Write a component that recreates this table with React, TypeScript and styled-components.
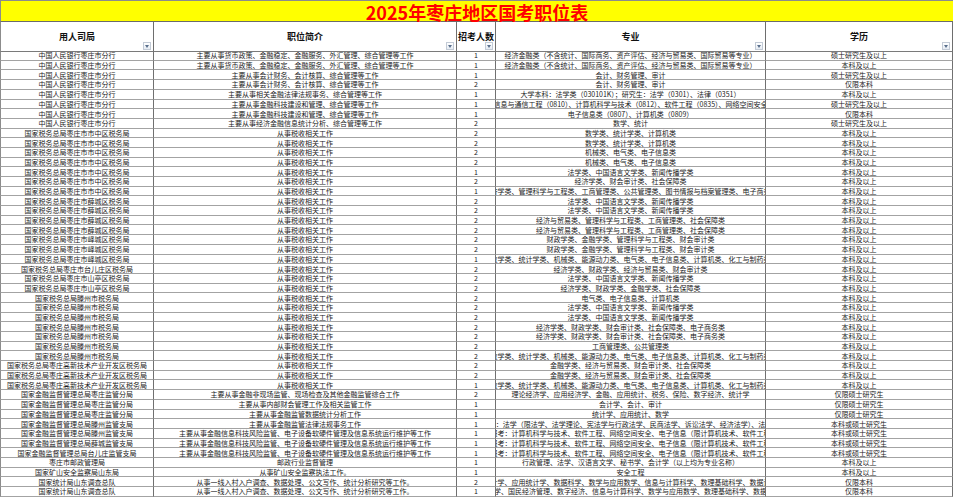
import React from "react";
import styled, { createGlobalStyle } from "styled-components";

const GlobalStyle = createGlobalStyle`
  body {
    margin: 0;
    background: #fff;
    font-family: "Noto Sans CJK SC", "Noto Sans", sans-serif;
  }
`;

const Sheet = styled.div`
  width: 953px;
  overflow: hidden;
`;

const TitleBar = styled.div`
  height: 22px;
  box-sizing: border-box;
  background: #ffff00;
  border-top: 1px solid #8c8c8c;
  border-bottom: 1px solid #6b6b6b;
  border-left: 1px solid #8c8c8c;
  display: flex;
  align-items: center;
  justify-content: center;
  color: #ff0000;
  font-size: 18px;
  font-weight: 700;
  line-height: 1;
  padding-top: 1px;
`;

const Grid = styled.div`
  display: grid;
  grid-template-columns: 154px 303px 39px 270px 187px;
  grid-auto-rows: 9.7px;
`;

const HeaderCell = styled.div<{ $first?: boolean }>`
  grid-row: span 3;
  height: 30.4px;
  box-sizing: border-box;
  position: relative;
  display: flex;
  align-items: center;
  justify-content: center;
  font-size: 9px;
  font-weight: 700;
  color: #111;
  white-space: nowrap;
  border-right: 1px solid #6e6e6e;
  border-bottom: 1px solid #7a7a7a;
  border-left: ${(p) => (p.$first ? "1px solid #8c8c8c" : "none")};
`;

const FilterButton = styled.span`
  position: absolute;
  right: 2px;
  bottom: 1px;
  width: 6px;
  height: 6px;
  border: 1px solid #c3cbd6;
  background: linear-gradient(#ffffff, #e6ecf4);
  display: flex;
  align-items: center;
  justify-content: center;
`;

const Cell = styled.div<{ $first?: boolean }>`
  box-sizing: border-box;
  display: flex;
  align-items: center;
  justify-content: center;
  overflow: hidden;
  white-space: nowrap;
  font-size: 7px;
  line-height: 1;
  color: #1a1a1a;
  padding-top: 1px;
  border-right: 1px solid #707070;
  border-bottom: 1px solid #a3a3a3;
  border-left: ${(p) => (p.$first ? "1px solid #8c8c8c" : "none")};
`;

const Arrow = () => (
  <svg width="4" height="3" viewBox="0 0 4 3">
    <path d="M0 0 L4 0 L2 3 Z" fill="#5a6f8c" />
  </svg>
);

type Row = [string, string, number, string, string];

const rmb = "中国人民银行枣庄市分行";
const tax = (d: string) => `国家税务总局枣庄市${d}税务局`;
const tz = "国家税务总局滕州市税务局";
const gx = "国家税务总局枣庄高新技术产业开发区税务局";
const work = "从事税收相关工作";
const econ = "经济金融类（不含统计、国际商务、资产评估、经济与贸易类、国际贸易等专业）";
const law = "法学类、中国语言文学类、新闻传播学类";
const sci = "数学类、统计学类、机械类、能源动力类、电气类、电子信息类、计算机类、化工与制药类";
const it = "主要从事金融信息科技风险监管、电子设备软硬件管理及信息系统运行维护等工作";
const itMajor = "研究生报考：计算机科学与技术、软件工程、网络空间安全、电子信息（限计算机技术、软件工程方向）";
const stat = "从事一线入村入户调查、数据处理、公文写作、统计分析研究等工作。";

const rows: Row[] = [
  [rmb, "主要从事货币政策、金融稳定、金融服务、外汇管理、综合管理等工作", 1, econ, "硕士研究生及以上"],
  [rmb, "主要从事货币政策、金融稳定、金融服务、外汇管理、综合管理等工作", 1, econ, "本科及以上"],
  [rmb, "主要从事会计财务、会计核算、综合管理等工作", 1, "会计、财务管理、审计", "硕士研究生及以上"],
  [rmb, "主要从事会计财务、会计核算、综合管理等工作", 2, "会计、财务管理、审计", "仅限本科"],
  [rmb, "主要从事相关金融法律法规事务、综合管理等工作", 1, "大学本科：法学类（030101K）；研究生：法学（0301）、法律（0351）", "本科及以上"],
  [rmb, "主要从事金融科技建设和管理、综合管理等工作", 1, "信息与通信工程（0810）、计算机科学与技术（0812）、软件工程（0835）、网络空间安全", "硕士研究生及以上"],
  [rmb, "主要从事金融科技建设和管理、综合管理等工作", 1, "电子信息类（0807）、计算机类（0809）", "仅限本科"],
  [rmb, "主要从事经济金融信息统计分析、综合管理等工作", 2, "数学、统计", "硕士研究生及以上"],
  [tax("市中区"), work, 2, "数学类、统计学类、计算机类", "本科及以上"],
  [tax("市中区"), work, 2, "数学类、统计学类、计算机类", "本科及以上"],
  [tax("市中区"), work, 2, "机械类、电气类、电子信息类", "本科及以上"],
  [tax("市中区"), work, 2, "机械类、电气类、电子信息类", "本科及以上"],
  [tax("市中区"), work, 1, law, "本科及以上"],
  [tax("市中区"), work, 2, "经济学类、财会审计类、社会保障类", "本科及以上"],
  [tax("市中区"), work, 1, "经济学类、管理科学与工程类、工商管理类、公共管理类、图书情报与档案管理类、电子商务类", "本科及以上"],
  [tax("薛城区"), work, 2, law, "本科及以上"],
  [tax("薛城区"), work, 2, law, "本科及以上"],
  [tax("薛城区"), work, 2, "经济与贸易类、管理科学与工程类、工商管理类、社会保障类", "本科及以上"],
  [tax("薛城区"), work, 2, "经济与贸易类、管理科学与工程类、工商管理类、社会保障类", "本科及以上"],
  [tax("峄城区"), work, 2, "财政学类、金融学类、管理科学与工程类、财会审计类", "本科及以上"],
  [tax("峄城区"), work, 2, "财政学类、金融学类、管理科学与工程类、财会审计类", "本科及以上"],
  [tax("峄城区"), work, 1, sci, "本科及以上"],
  [tax("台儿庄区"), work, 2, "经济学类、财政学类、经济与贸易类、财会审计类", "本科及以上"],
  [tax("山亭区"), work, 2, law, "本科及以上"],
  [tax("山亭区"), work, 2, "经济学类、财政学类、金融学类、社会保障类", "本科及以上"],
  [tz, work, 2, "电气类、电子信息类、计算机类", "本科及以上"],
  [tz, work, 2, law, "本科及以上"],
  [tz, work, 2, law, "本科及以上"],
  [tz, work, 2, "经济学类、财政学类、财会审计类、社会保障类、电子商务类", "本科及以上"],
  [tz, work, 2, "经济学类、财政学类、财会审计类、社会保障类、电子商务类", "本科及以上"],
  [tz, work, 2, "工商管理类、公共管理类", "本科及以上"],
  [tz, work, 2, sci, "本科及以上"],
  [gx, work, 2, "金融学类、经济与贸易类、财会审计类、社会保障类", "本科及以上"],
  [gx, work, 2, "金融学类、经济与贸易类、财会审计类、社会保障类", "本科及以上"],
  [gx, work, 1, sci, "本科及以上"],
  ["国家金融监督管理总局枣庄监管分局", "主要从事金融非现场监管、现场检查及其他金融监管综合工作", 2, "理论经济学、应用经济学、金融、应用统计、税务、保险、数字经济、统计学", "仅限硕士研究生"],
  ["国家金融监督管理总局枣庄监管分局", "主要从事内部财会管理工作及相关监管工作", 1, "会计学、会计、审计", "仅限硕士研究生"],
  ["国家金融监督管理总局枣庄监管分局", "主要从事金融监管数据统计分析工作", 1, "统计学、应用统计、数学", "仅限硕士研究生"],
  ["国家金融监督管理总局滕州监管支局", "主要从事金融监管法律法规事务工作", 1, "研究生报考：法学（限法学、法学理论、宪法学与行政法学、民商法学、诉讼法学、经济法学）、法律（法学）", "本科或硕士研究生"],
  ["国家金融监督管理总局滕州监管支局", it, 1, itMajor, "本科或硕士研究生"],
  ["国家金融监督管理总局薛城监管支局", it, 1, itMajor, "本科或硕士研究生"],
  ["国家金融监督管理总局台儿庄监管支局", it, 1, itMajor, "本科或硕士研究生"],
  ["枣庄市邮政管理局", "邮政行业监督管理", 1, "行政管理、法学、汉语言文学、秘书学、会计学（以上均为专业名称）", "本科及以上"],
  ["国家矿山安全监察局山东局", "从事矿山安全监察执法工作。", 1, "安全工程", "本科及以上"],
  ["国家统计局山东调查总队", stat, 2, "统计学、应用统计学、数据科学、数学与应用数学、信息与计算科学、数理基础科学、数据计算", "仅限本科"],
  ["国家统计局山东调查总队", stat, 1, "统计学、国民经济管理、数字经济、信息与计算科学、数学与应用数学、数理基础科学、数据科学", "仅限本科"],
];

const headers = ["用人司局", "职位简介", "招考人数", "专业", "学历"];

export default function App() {
  return (
    <>
      <GlobalStyle />
      <Sheet>
        <TitleBar>2025年枣庄地区国考职位表</TitleBar>
        <Grid>
          {headers.map((h, i) => (
            <HeaderCell key={h} $first={i === 0}>
              {h}
              <FilterButton>
                <Arrow />
              </FilterButton>
            </HeaderCell>
          ))}
          {rows.map((r, ri) =>
            r.map((v, ci) => (
              <Cell key={`${ri}-${ci}`} $first={ci === 0}>
                {v}
              </Cell>
            ))
          )}
        </Grid>
      </Sheet>
    </>
  );
}
